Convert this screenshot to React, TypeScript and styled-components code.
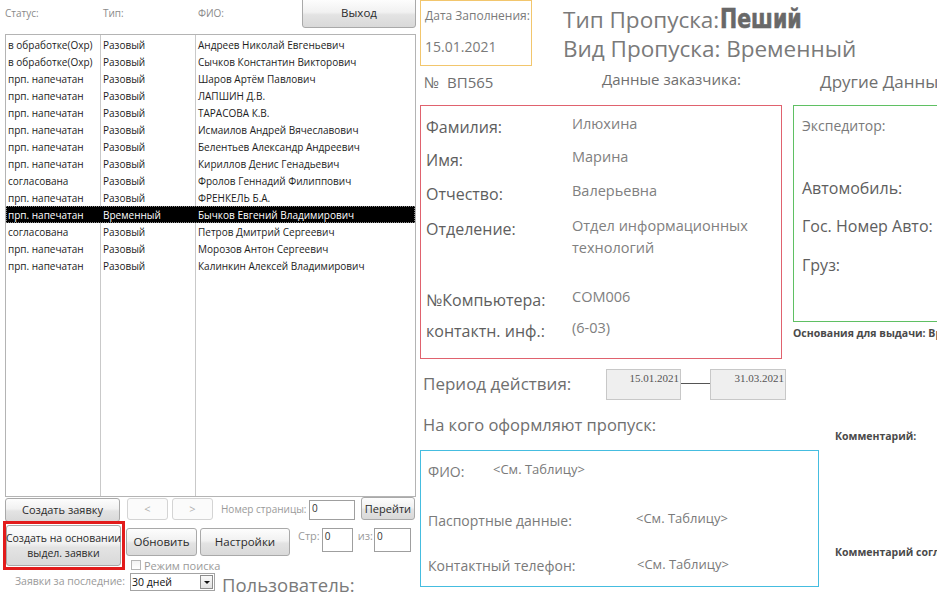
import React from "react";
import styled, { createGlobalStyle } from "styled-components";

const Global = createGlobalStyle`
  html, body { margin: 0; padding: 0; background: #fff; overflow: hidden; }
  body { font-family: "Open Sans", "Noto Sans", sans-serif; }
  * { box-sizing: border-box; }
`;

const Page = styled.div`
  width: 937px;
  height: 605px;
  display: flex;
  overflow: hidden;
  background: #fff;
`;

/* ---------------- LEFT ---------------- */
const LeftPane = styled.div`
  width: 420px;
  flex-shrink: 0;
  display: flex;
  flex-direction: column;
`;

const HeaderRow = styled.div`
  height: 34px;
  display: flex;
  align-items: flex-start;
  padding-left: 5px;
`;

const HeaderLabel = styled.div<{ $w?: number }>`
  width: ${(p) => (p.$w ? `${p.$w}px` : "auto")};
  padding-top: 5px;
  font-size: 10px;
  line-height: 16px;
  color: #8a8a8a;
`;

const Button = styled.button<{ $w: number; $h: number; $fs?: number; $disabled?: boolean }>`
  width: ${(p) => p.$w}px;
  height: ${(p) => p.$h}px;
  flex-shrink: 0;
  padding: 0;
  margin: 0;
  border: 1px solid ${(p) => (p.$disabled ? "#d4d4d4" : "#a9a9a9")};
  border-radius: 3px;
  background: ${(p) =>
    p.$disabled
      ? "#fbfbfb"
      : "linear-gradient(to bottom, #fdfdfd 0%, #f1f1f1 45%, #e3e3e3 55%, #d9d9d9 100%)"};
  font-family: "Open Sans", sans-serif;
  font-size: ${(p) => p.$fs ?? 11}px;
  line-height: 1.4;
  color: ${(p) => (p.$disabled ? "#b0b0b0" : "#2b2b2b")};
  display: flex;
  align-items: center;
  justify-content: center;
  text-align: center;
  white-space: nowrap;
`;

const ExitButton = styled(Button)`
  margin-left: auto;
  margin-right: 4px;
  margin-top: -1px;
  border-top-left-radius: 0;
  border-top-right-radius: 0;
`;

const ListBox = styled.div`
  margin: 0 4px 0 5px;
  height: 463px;
  border: 1px solid #b4b4b4;
  padding-top: 1px;
  background:
    linear-gradient(#c9c9c9, #c9c9c9) 94px 0 / 1px 100% no-repeat,
    linear-gradient(#c9c9c9, #c9c9c9) 189px 0 / 1px 100% no-repeat,
    #fff;
`;

const ListRow = styled.div<{ $sel?: boolean }>`
  display: grid;
  grid-template-columns: 95px 95px 1fr;
  height: 17px;
  align-items: center;
  font-size: 10px;
  color: ${(p) => (p.$sel ? "#fff" : "#1c1c1c")};
  background: ${(p) => (p.$sel ? "#000" : "transparent")};
  outline: ${(p) => (p.$sel ? "1px dotted #888" : "none")};
  outline-offset: -1px;
`;

const Cell = styled.div`
  padding-left: 2px;
  white-space: nowrap;
  overflow: hidden;
`;

const BottomRow = styled.div<{ $mt?: number; $h?: number }>`
  display: flex;
  align-items: flex-start;
  margin-top: ${(p) => p.$mt ?? 0}px;
  height: ${(p) => (p.$h ? `${p.$h}px` : "auto")};
`;

const Spacer = styled.div<{ $w: number }>`
  width: ${(p) => p.$w}px;
  flex-shrink: 0;
`;

const GrayLabel = styled.div<{ $fs?: number; $mt?: number; $w?: number; $right?: boolean }>`
  font-size: ${(p) => p.$fs ?? 11}px;
  color: #9a9a9a;
  margin-top: ${(p) => p.$mt ?? 0}px;
  width: ${(p) => (p.$w ? `${p.$w}px` : "auto")};
  text-align: ${(p) => (p.$right ? "right" : "left")};
  white-space: nowrap;
  flex-shrink: 0;
`;

const TextInput = styled.div<{ $w: number; $h: number; $mt?: number }>`
  width: ${(p) => p.$w}px;
  height: ${(p) => p.$h}px;
  margin-top: ${(p) => p.$mt ?? 0}px;
  flex-shrink: 0;
  border: 1px solid #9f9f9f;
  background: #fff;
  font-size: 10px;
  line-height: 14px;
  padding-left: 2px;
  color: #333;
`;

const GoButton = styled(Button)`
  margin-top: -1px;
`;

const RedFrame = styled.div`
  margin-left: 3px;
  width: 122px;
  height: 49px;
  border: 3px solid #e21b1b;
  padding: 1px 2px 1px 0;
  display: flex;
  flex-shrink: 0;
`;

const ActionsCol = styled.div`
  display: flex;
  flex-direction: column;
`;

const CheckRow = styled.div`
  display: flex;
  align-items: center;
  margin-left: 6px;
  margin-top: 3px;
  gap: 3px;
  height: 12px;
`;

const CheckBox = styled.div`
  width: 10px;
  height: 10px;
  border: 1px solid #b5b5b5;
  background: linear-gradient(#f2f2f2, #fff);
`;

const Combo = styled.div`
  width: 85px;
  height: 18px;
  border: 1px solid #a3a3a3;
  display: flex;
  align-items: center;
  font-size: 10.5px;
  color: #111;
  padding-left: 1px;
  margin-left: 5px;
  flex-shrink: 0;
`;

const ComboText = styled.div`
  flex: 1;
`;

const ComboArrow = styled.div`
  width: 13px;
  height: 14px;
  margin-right: 1px;
  border: 1px solid #8c8c8c;
  background: linear-gradient(#fafafa, #e1e1e1);
  display: flex;
  align-items: center;
  justify-content: center;
  &::after {
    content: "";
    border-left: 3px solid transparent;
    border-right: 3px solid transparent;
    border-top: 3px solid #111;
  }
`;

const UserLabel = styled.div`
  font-size: 18.5px;
  color: #7a7a7a;
  margin-left: 7px;
  margin-top: 0px;
  line-height: 24px;
  white-space: nowrap;
`;

/* ---------------- RIGHT ---------------- */
const RightPane = styled.div`
  flex: 1;
  display: flex;
  flex-direction: column;
  color: #6f6f6f;
  min-width: 0;
`;

const Row = styled.div<{ $mt?: number; $h?: number }>`
  display: flex;
  align-items: flex-start;
  margin-top: ${(p) => p.$mt ?? 0}px;
  height: ${(p) => (p.$h ? `${p.$h}px` : "auto")};
  white-space: nowrap;
  flex-shrink: 0;
`;

const DateBox = styled.div`
  width: 112px;
  height: 66px;
  border: 1px solid #f2c66d;
  padding: 4px 0 0 4px;
  color: #7a7a7a;
  flex-shrink: 0;
`;

const DateCaption = styled.div`
  font-size: 12px;
  line-height: 22px;
`;

const DateValue = styled.div`
  font-size: 14px;
  line-height: 22px;
  margin-top: 9px;
`;

const TitleBlock = styled.div`
  margin-left: 31px;
  padding-top: 5px;
  font-size: 22.5px;
  line-height: 29px;
  color: #7a7a7a;
`;

const Heavy = styled.span`
  display: inline-block;
  font-family: "DejaVu Sans", sans-serif;
  font-weight: 700;
  font-size: 27px;
  line-height: 1;
  color: #686868;
  margin-left: 1px;
  transform: scaleX(0.76);
  transform-origin: left center;
  -webkit-text-stroke: 0.6px #686868;
`;

const Text = styled.div<{ $fs: number; $w?: number; $ml?: number; $mt?: number; $c?: string; $bold?: boolean }>`
  font-size: ${(p) => p.$fs}px;
  width: ${(p) => (p.$w ? `${p.$w}px` : "auto")};
  margin-left: ${(p) => p.$ml ?? 0}px;
  margin-top: ${(p) => p.$mt ?? 0}px;
  color: ${(p) => p.$c ?? "inherit"};
  font-weight: ${(p) => (p.$bold ? 700 : 400)};
  flex-shrink: 0;
  white-space: nowrap;
  line-height: 1.3;
`;

const RedBox = styled.div`
  width: 362px;
  height: 254px;
  border: 1px solid #e0626e;
  padding: 10px 0 0 5px;
  display: grid;
  grid-template-columns: 146px 1fr;
  grid-template-rows: 33px 34px 35px 71px 31px 1fr;
  flex-shrink: 0;
`;

const FieldLabel = styled.div`
  font-size: 16px;
  line-height: 22px;
  color: #5e5e5e;
`;

const FieldValue = styled.div`
  font-size: 14.5px;
  line-height: 22px;
  margin-top: -3px;
  color: #808080;
  white-space: normal;
`;

const GreenCol = styled.div`
  margin-left: 11px;
  display: flex;
  flex-direction: column;
`;

const GreenBox = styled.div`
  width: 220px;
  height: 217px;
  border: 1px solid #5fc063;
  padding: 11px 0 0 8px;
  color: #5e5e5e;
`;

const PeriodBox = styled.div<{ $w: number }>`
  width: ${(p) => p.$w}px;
  height: 31px;
  flex-shrink: 0;
  background: #efefef;
  border: 1px solid #c8c8c8;
  font-family: "Liberation Serif", serif;
  font-size: 11px;
  text-align: right;
  padding: 2px 1px 0 0;
  color: #555;
`;

const Connector = styled.div`
  width: 29px;
  height: 1px;
  margin-top: 14px;
  background: #555;
  flex-shrink: 0;
`;

const CyanBox = styled.div`
  width: 399px;
  height: 137px;
  border: 1px solid #45bde0;
  flex-shrink: 0;
  display: flex;
  flex-direction: column;
  padding: 12px 0 0 7px;
  color: #7a7a7a;
`;

const CyanLine = styled.div<{ $mt?: number }>`
  display: flex;
  align-items: flex-start;
  margin-top: ${(p) => p.$mt ?? 0}px;
`;

const rows: [string, string, string][] = [
  ["в обработке(Охр)", "Разовый", "Андреев Николай Евгеньевич"],
  ["в обработке(Охр)", "Разовый", "Сычков Константин Викторович"],
  ["прп. напечатан", "Разовый", "Шаров Артём Павлович"],
  ["прп. напечатан", "Разовый", "ЛАПШИН Д.В."],
  ["прп. напечатан", "Разовый", "ТАРАСОВА К.В."],
  ["прп. напечатан", "Разовый", "Исмаилов Андрей Вячеславович"],
  ["прп. напечатан", "Разовый", "Белентьев Александр Андреевич"],
  ["прп. напечатан", "Разовый", "Кириллов Денис Генадьевич"],
  ["согласована", "Разовый", "Фролов Геннадий Филиппович"],
  ["прп. напечатан", "Разовый", "ФРЕНКЕЛЬ Б.А."],
  ["прп. напечатан", "Временный", "Бычков Евгений Владимирович"],
  ["согласована", "Разовый", "Петров Дмитрий Сергеевич"],
  ["прп. напечатан", "Разовый", "Морозов Антон Сергеевич"],
  ["прп. напечатан", "Разовый", "Калинкин Алексей Владимирович"],
];

export default function App() {
  return (
    <>
      <Global />
      <Page>
        <LeftPane>
          <HeaderRow>
            <HeaderLabel $w={98}>Статус:</HeaderLabel>
            <HeaderLabel $w={95}>Тип:</HeaderLabel>
            <HeaderLabel>ФИО:</HeaderLabel>
            <ExitButton $w={114} $h={29} $fs={11.5}>
              Выход
            </ExitButton>
          </HeaderRow>
          <ListBox>
            {rows.map((r, i) => (
              <ListRow key={i} $sel={i === 10}>
                <Cell>{r[0]}</Cell>
                <Cell>{r[1]}</Cell>
                <Cell>{r[2]}</Cell>
              </ListRow>
            ))}
          </ListBox>
          <BottomRow $mt={1} $h={23}>
            <Spacer $w={5} />
            <Button $w={115} $h={24}>Создать заявку</Button>
            <Spacer $w={7} />
            <Button $w={41} $h={22} $disabled>&lt;</Button>
            <Spacer $w={4} />
            <Button $w={41} $h={22} $disabled>&gt;</Button>
            <Spacer $w={8} />
            <GrayLabel $fs={10} $mt={4} $w={88}>Номер страницы:</GrayLabel>
            <TextInput $w={46} $h={20} $mt={2}>0</TextInput>
            <Spacer $w={6} />
            <GoButton $w={54} $h={23}>Перейти</GoButton>
          </BottomRow>
          <BottomRow $h={49}>
            <RedFrame>
              <Button $w={115} $h={41} $fs={10.5}>
                Создать на основании
                <br />
                выдел. заявки
              </Button>
            </RedFrame>
            <ActionsCol>
              <BottomRow $mt={7}>
                <Spacer $w={1} />
                <Button $w={71} $h={28} $fs={11.5}>Обновить</Button>
                <Spacer $w={3} />
                <Button $w={90} $h={28} $fs={11.5}>Настройки</Button>
                <Spacer $w={8} />
                <GrayLabel>Стр:</GrayLabel>
                <Spacer $w={2} />
                <TextInput $w={31} $h={24}>0</TextInput>
                <Spacer $w={5} />
                <GrayLabel>из:</GrayLabel>
                <Spacer $w={1} />
                <TextInput $w={37} $h={24}>0</TextInput>
              </BottomRow>
              <CheckRow>
                <CheckBox />
                <GrayLabel $fs={11}>Режим поиска</GrayLabel>
              </CheckRow>
            </ActionsCol>
          </BottomRow>
          <BottomRow $mt={3}>
            <GrayLabel $fs={10.5} $mt={1} $w={125} $right>
              Заявки за последние:
            </GrayLabel>
            <Combo>
              <ComboText>30 дней</ComboText>
              <ComboArrow />
            </Combo>
            <UserLabel>Пользователь:</UserLabel>
          </BottomRow>
        </LeftPane>

        <RightPane>
          <Row>
            <DateBox>
              <DateCaption>Дата Заполнения:</DateCaption>
              <DateValue>15.01.2021</DateValue>
            </DateBox>
            <TitleBlock>
              <div>
                Тип Пропуска:<Heavy>Пеший</Heavy>
              </div>
              <div>Вид Пропуска: Временный</div>
            </TitleBlock>
          </Row>
          <Row $mt={4} $h={28}>
            <Text $fs={15} $ml={4} $w={178} $mt={3}>№&nbsp;&nbsp;ВП565</Text>
            <Text $fs={15} $w={218}>Данные заказчика:</Text>
            <Text $fs={17} $mt={1}>Другие Данные:</Text>
          </Row>
          <Row $mt={7}>
            <RedBox>
              <FieldLabel>Фамилия:</FieldLabel>
              <FieldValue>Илюхина</FieldValue>
              <FieldLabel>Имя:</FieldLabel>
              <FieldValue>Марина</FieldValue>
              <FieldLabel>Отчество:</FieldLabel>
              <FieldValue>Валерьевна</FieldValue>
              <FieldLabel>Отделение:</FieldLabel>
              <FieldValue>
                Отдел информационных
                <br />
                технологий
              </FieldValue>
              <FieldLabel>№Компьютера:</FieldLabel>
              <FieldValue>COM006</FieldValue>
              <FieldLabel>контактн. инф.:</FieldLabel>
              <FieldValue>(6-03)</FieldValue>
            </RedBox>
            <GreenCol>
              <GreenBox>
                <Text $fs={14} $c="#7a7a7a">Экспедитор:</Text>
                <Text $fs={16} $mt={43}>Автомобиль:</Text>
                <Text $fs={16} $mt={17}>Гос. Номер Авто:</Text>
                <Text $fs={16} $mt={18}>Груз:</Text>
              </GreenBox>
              <Text $fs={10.5} $bold $c="#4a4a4a" $mt={5}>Основания для выдачи: Временный</Text>
            </GreenCol>
          </Row>
          <Row $mt={10}>
            <Text $fs={17} $ml={3} $w={183} $mt={4}>Период действия:</Text>
            <PeriodBox $w={75}>15.01.2021</PeriodBox>
            <Connector />
            <PeriodBox $w={76}>31.03.2021</PeriodBox>
          </Row>
          <Row $mt={14}>
            <Text $fs={16.5} $ml={3} $w={412}>На кого оформляют пропуск:</Text>
            <Text $fs={10.5} $bold $c="#4a4a4a" $mt={16}>Комментарий:</Text>
          </Row>
          <Row $mt={6}>
            <CyanBox>
              <CyanLine>
                <Text $fs={14} $w={65}>ФИО:</Text>
                <Text $fs={13} $mt={-2}>&lt;См. Таблицу&gt;</Text>
              </CyanLine>
              <CyanLine $mt={31}>
                <Text $fs={14} $w={208}>Паспортные данные:</Text>
                <Text $fs={13} $mt={-2}>&lt;См. Таблицу&gt;</Text>
              </CyanLine>
              <CyanLine $mt={27}>
                <Text $fs={14} $w={209}>Контактный телефон:</Text>
                <Text $fs={13} $mt={-1}>&lt;См. Таблицу&gt;</Text>
              </CyanLine>
            </CyanBox>
            <Text $fs={10.5} $bold $c="#4a4a4a" $ml={16} $mt={96}>Комментарий согласования:</Text>
          </Row>
        </RightPane>
      </Page>
    </>
  );
}
